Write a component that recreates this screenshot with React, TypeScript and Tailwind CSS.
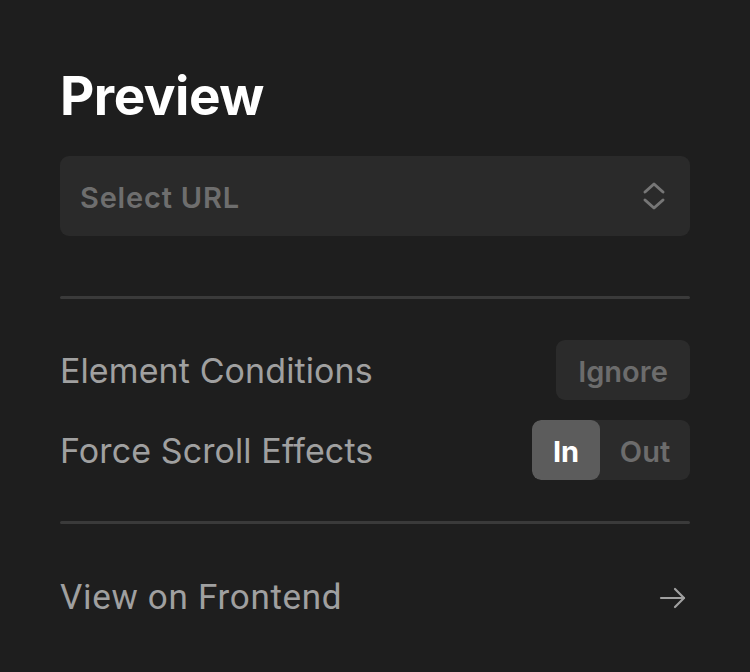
import React from "react";

export default function App() {
  return (
    <div className="w-[750px] h-[672px] bg-[#1e1e1e] px-[60px] pt-[66px]" style={{ fontFamily: "Inter, 'Noto Sans', sans-serif" }}>
      <h1 className="text-[53px] leading-[60px] font-bold text-white tracking-[-0.5px]">Preview</h1>
      <div className="mt-[30px] h-[80px] rounded-[9px] bg-[#2a2a2a] flex items-center justify-between pl-[20px] pr-[24px]">
        <span className="text-[29px] font-semibold text-[#6e6e6e] tracking-[0.8px] pt-[3px]">Select URL</span>
        <svg width="24" height="30" viewBox="0 0 24 30" fill="none" stroke="#767676" strokeWidth="3" strokeLinecap="round" strokeLinejoin="round">
          <path d="M3 11 L12 3 L21 11" />
          <path d="M3 19 L12 27 L21 19" />
        </svg>
      </div>
      <div className="mt-[60px] h-[3px] rounded-full bg-[#3a3a3a]" />
      <div className="mt-[41px] flex items-center justify-between h-[60px]">
        <span className="text-[34px] text-[#a0a0a0] tracking-[0.1px]">Element Conditions</span>
        <div className="h-[60px] w-[134px] rounded-[9px] bg-[#2b2b2b] flex items-center justify-center text-[29px] font-semibold text-[#6c6c6c] pt-[3px]">Ignore</div>
      </div>
      <div className="mt-[20px] flex items-center justify-between h-[60px]">
        <span className="text-[34px] text-[#a0a0a0] tracking-[0.1px]">Force Scroll Effects</span>
        <div className="h-[60px] w-[158px] rounded-[9px] bg-[#2b2b2b] flex overflow-hidden">
          <div className="w-[68px] bg-[#5c5c5c] rounded-[9px] flex items-center justify-center text-[29px] font-bold text-white pt-[3px]">In</div>
          <div className="flex-1 flex items-center justify-center text-[29px] font-semibold text-[#6c6c6c] pt-[3px]">Out</div>
        </div>
      </div>
      <div className="mt-[41px] h-[3px] rounded-full bg-[#3a3a3a]" />
      <div className="mt-[48px] flex items-center justify-between">
        <span className="text-[35px] text-[#a0a0a0] tracking-[0.7px]" style={{ fontFamily: "Roboto, sans-serif" }}>View on Frontend</span>
        <svg width="30" height="24" viewBox="0 0 30 24" fill="none" stroke="#a0a0a0" strokeWidth="2.2" strokeLinecap="round" strokeLinejoin="round" className="mr-[2px]">
          <path d="M3 12 H26" />
          <path d="M17 3 L26 12 L17 21" />
        </svg>
      </div>
    </div>
  );
}
